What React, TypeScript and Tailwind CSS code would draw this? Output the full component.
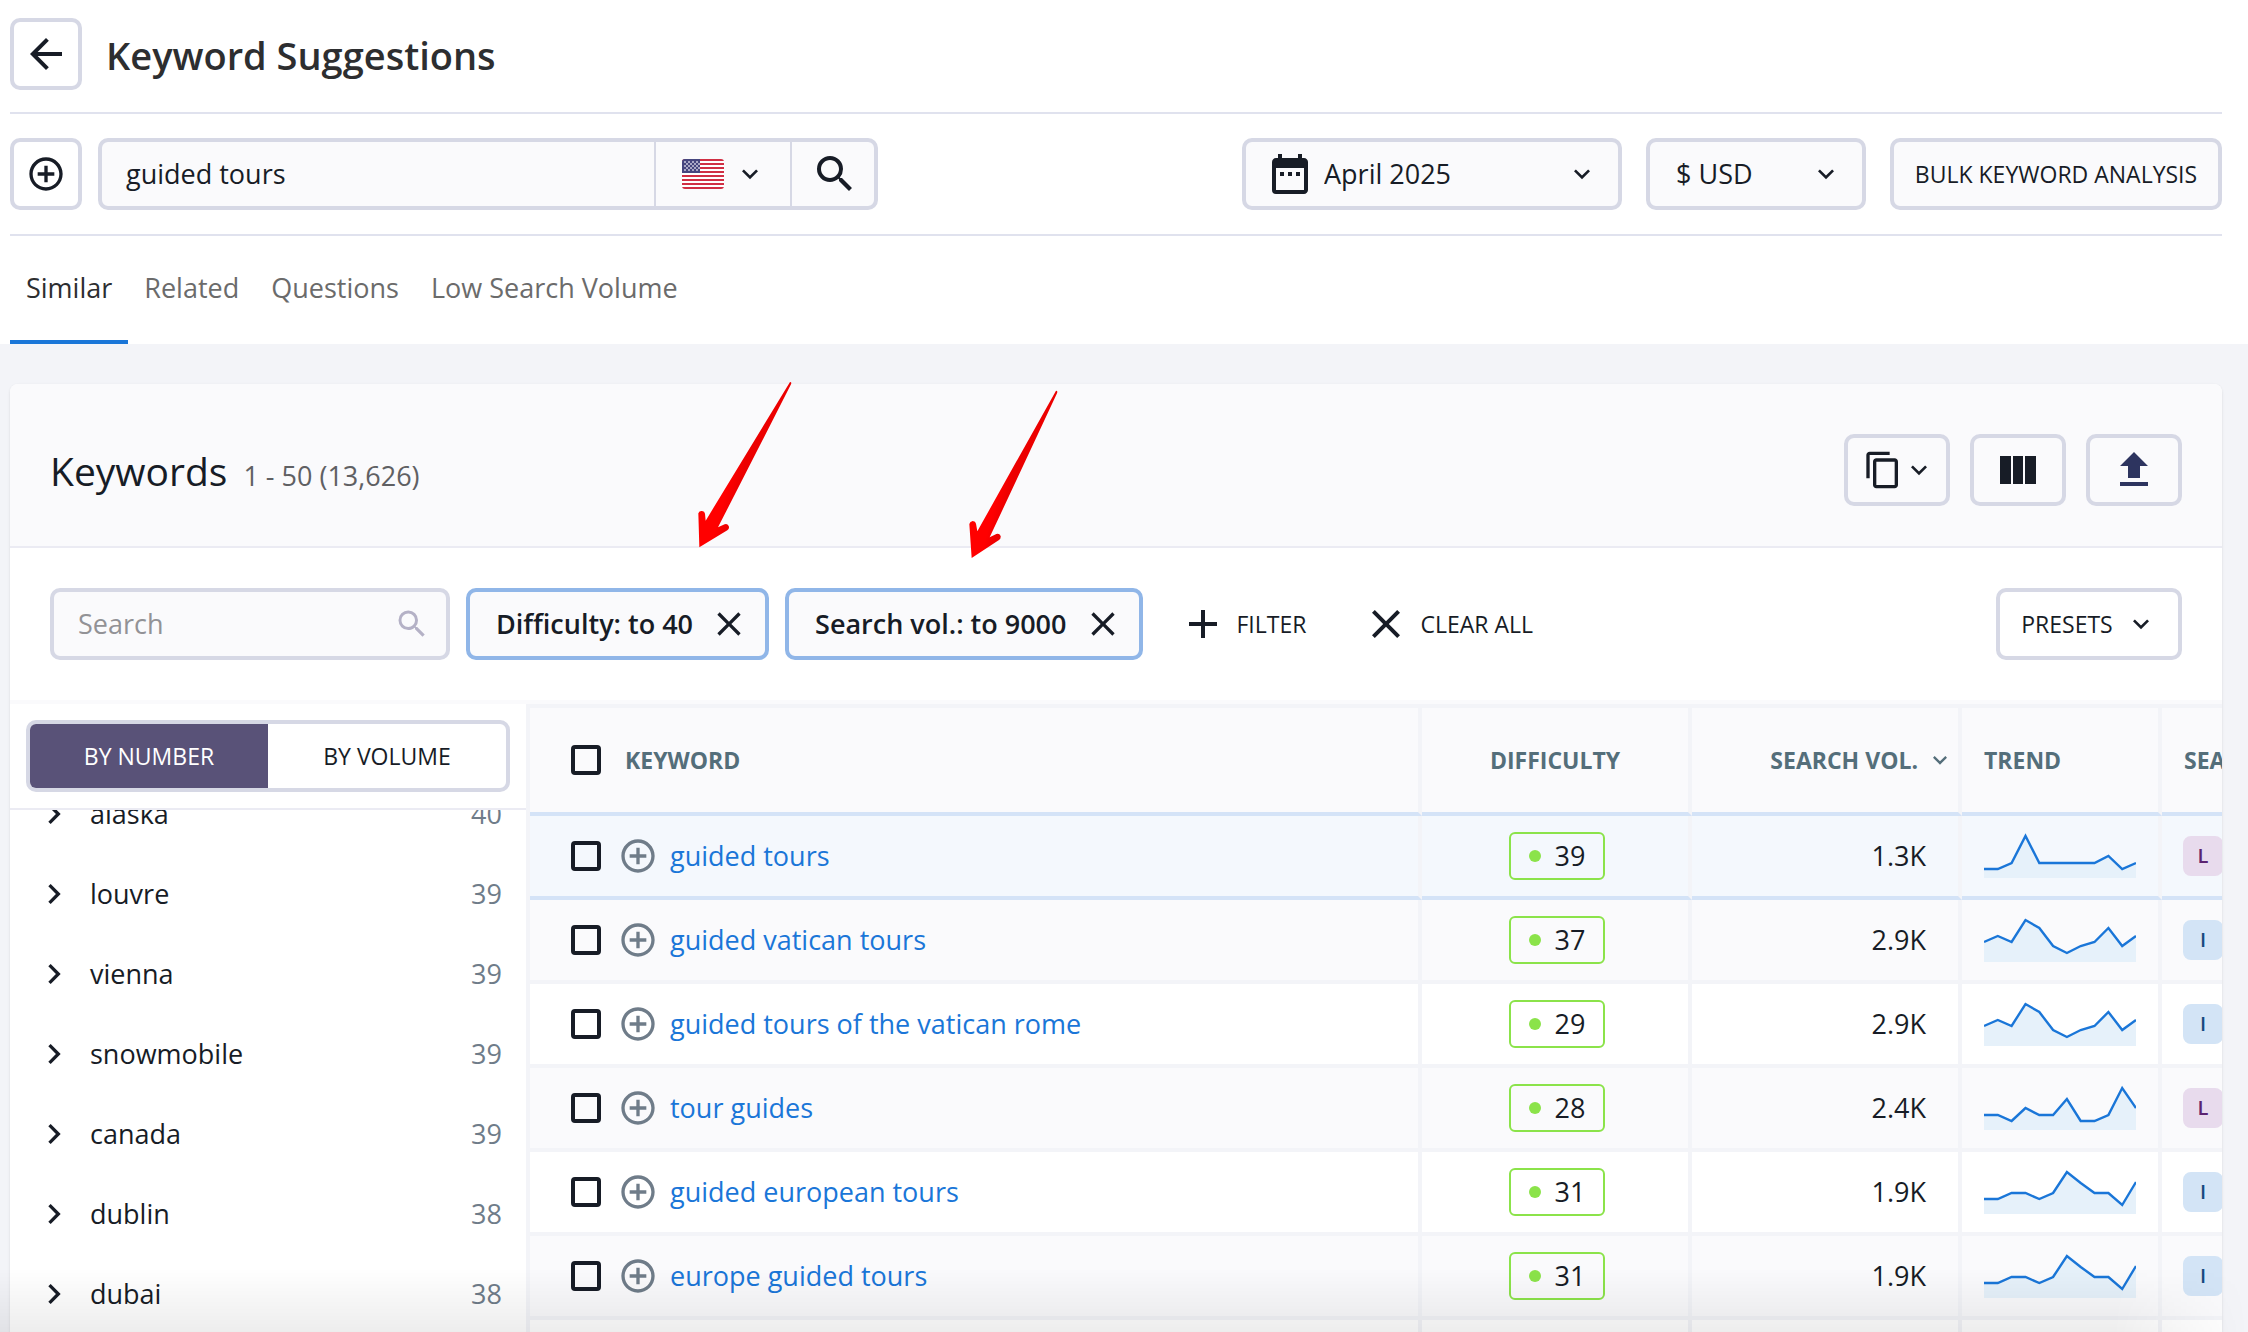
import { useState } from "react";
import type { ReactNode } from "react";
import {
  MdAdd,
  MdAddCircleOutline,
  MdArrowBack,
  MdChevronRight,
  MdClose,
  MdContentCopy,
  MdDateRange,
  MdFileUpload,
  MdKeyboardArrowDown,
  MdSearch,
} from "react-icons/md";

type Row = {
  keyword: string;
  difficulty: number;
  volume: string;
  trend: number[];
  intent: "L" | "I";
};

const tabs = ["Similar", "Related", "Questions", "Low Search Volume"];

const groups = [
  { name: "alaska", count: 40 },
  { name: "louvre", count: 39 },
  { name: "vienna", count: 39 },
  { name: "snowmobile", count: 39 },
  { name: "canada", count: 39 },
  { name: "dublin", count: 38 },
  { name: "dubai", count: 38 },
];

const vatican = [28, 22, 28, 6, 14, 32, 39, 32, 28, 14, 32, 22];
const europe = [33, 33, 27, 27, 33, 27, 6, 17, 27, 27, 39, 16];

const rows: Row[] = [
  {
    keyword: "guided tours",
    difficulty: 39,
    volume: "1.3K",
    trend: [39, 39, 33, 6, 33, 33, 33, 33, 33, 26, 39, 33],
    intent: "L",
  },
  { keyword: "guided vatican tours", difficulty: 37, volume: "2.9K", trend: vatican, intent: "I" },
  { keyword: "guided tours of the vatican rome", difficulty: 29, volume: "2.9K", trend: vatican, intent: "I" },
  {
    keyword: "tour guides",
    difficulty: 28,
    volume: "2.4K",
    trend: [33, 33, 39, 26, 33, 33, 17, 39, 39, 33, 6, 26],
    intent: "L",
  },
  { keyword: "guided european tours", difficulty: 31, volume: "1.9K", trend: europe, intent: "I" },
  { keyword: "europe guided tours", difficulty: 31, volume: "1.9K", trend: europe, intent: "I" },
];

const checkbox =
  "block size-[30px] shrink-0 appearance-none rounded-[4px] border-4 border-[#171c26] checked:bg-[#171c26]";
const box = "h-[72px] rounded-[10px] border-4 border-[#d6d8e5]";

function UsFlag() {
  return (
    <svg width="42" height="30" viewBox="0 0 42 30">
      <clipPath id="flag">
        <rect width="42" height="30" rx="3" />
      </clipPath>
      <g clipPath="url(#flag)">
        <rect width="42" height="30" fill="#fff" />
        {[0, 4, 8, 12, 16, 20, 24, 28].map((y) => (
          <rect key={y} y={y} width="42" height="2" fill="#d02f44" />
        ))}
        <rect width="18" height="14" fill="#46467f" />
        {[2, 4, 6, 8, 10].map((y, i) =>
          [0, 1, 2, 3].map((n) => (
            <rect
              key={`${y}-${n}`}
              x={2 + n * 4 + (i % 2 ? 2 : 0)}
              y={y}
              width="2"
              height="2"
              fill="#a9a8c6"
            />
          )),
        )}
      </g>
    </svg>
  );
}

function ColumnsIcon() {
  return (
    <svg width="36" height="28" viewBox="0 0 36 28" fill="#171c26">
      <rect width="11" height="28" />
      <rect x="13" width="10" height="28" />
      <rect x="25" width="11" height="28" />
    </svg>
  );
}

function Trend({ values }: { values: number[] }) {
  const step = 152 / (values.length - 1);
  const line = values.map((v, i) => `${(i * step).toFixed(1)},${v}`).join(" ");
  return (
    <svg width="152" height="48" viewBox="0 0 152 48" className="block">
      <polygon points={`0,48 ${line} 152,48`} fill="#e6f1fa" />
      <polyline points={line} fill="none" stroke="#1a76d8" strokeWidth="2.4" />
    </svg>
  );
}

function PointerArrows() {
  return (
    <svg
      className="pointer-events-none absolute -top-[14px] left-[670px]"
      width="400"
      height="200"
      viewBox="0 0 1200 600"
    >
      <defs>
        <linearGradient id="red" x1="0.3" y1="0.4" x2="0.5" y2="0.5">
          <stop offset="0.5" stopColor="#ff0000" />
          <stop offset="1" stopColor="#ec0000" />
        </linearGradient>
      </defs>
      <path
        fill="url(#red)"
        d="M330 36Q336 36 333 43L114 472L134 463Q144 460 147 470Q148 477 142 481L58 532L55 430Q58 422 66 423Q74 424 75 431L77 452Z"
      />
      <path
        fill="url(#red)"
        d="M1128 62Q1134 62 1131 70L929 502L949 492Q958 489 962 498Q963 506 957 510L875 564L868 462Q870 454 878 453Q887 454 888 461L892 484Z"
      />
    </svg>
  );
}

function SelectBox({
  label,
  className,
  icon,
  children,
}: {
  label: string;
  className: string;
  icon?: ReactNode;
  children: ReactNode;
}) {
  return (
    <div className={`relative ${className}`}>
      {icon}
      <select
        aria-label={label}
        className={`${box} w-full appearance-none bg-[#fafafc] font-medium ${icon ? "pl-[78px]" : "pl-[26px]"}`}
      >
        {children}
      </select>
      <MdKeyboardArrowDown className="pointer-events-none absolute top-5 right-6 size-8" />
    </div>
  );
}

function FilterChip({ text, onRemove }: { text: string; onRemove: () => void }) {
  return (
    <div className="flex h-[72px] items-center gap-4 rounded-[10px] border-4 border-[#90b6e8] bg-[#fafafc] pr-4 pl-[26px] font-semibold">
      {text}
      <button type="button" aria-label={`Remove ${text}`} onClick={onRemove}>
        <MdClose className="size-10" />
      </button>
    </div>
  );
}

export default function App() {
  const [tab, setTab] = useState("Similar");
  const [mode, setMode] = useState<"number" | "volume">("number");
  const [query, setQuery] = useState("guided tours");
  const [filters, setFilters] = useState(["Difficulty: to 40", "Search vol.: to 9000"]);

  return (
    <div className="relative flex h-screen flex-col overflow-hidden bg-[#f3f4f8] font-['Open_Sans',sans-serif] text-[27px] leading-9 text-[#171c26]">
      <header className="bg-white pr-[26px] pl-[10px]">
        <div className="flex items-center gap-6 border-b-2 border-[#e0e2ee] pt-[18px] pb-[22px]">
          <button type="button" aria-label="Back" className={`${box} flex w-[72px] items-center justify-center`}>
            <MdArrowBack className="size-12 shrink-0" />
          </button>
          <h1 className="pt-0.5 text-[38px] leading-[48px] font-semibold text-[#2d2e30]">Keyword Suggestions</h1>
        </div>

        <div className="flex items-center justify-between border-b-2 border-[#e0e2ee] py-6">
          <div className="flex gap-4">
            <button type="button" aria-label="Add keyword" className={`${box} flex w-[72px] items-center justify-center`}>
              <MdAddCircleOutline className="size-10 shrink-0" />
            </button>
            <form
              onSubmit={(e) => e.preventDefault()}
              className={`${box} flex w-[780px] divide-x-2 divide-[#d6d8e5] bg-[#fafafc]`}
            >
              <input
                type="text"
                aria-label="Keyword"
                value={query}
                onChange={(e) => setQuery(e.target.value)}
                className="min-w-0 flex-1 pl-6 outline-none"
              />
              <button type="button" aria-label="Country" className="flex w-[136px] items-center justify-center gap-[10px] pl-0.5">
                <UsFlag />
                <MdKeyboardArrowDown className="size-8" />
              </button>
              <button type="submit" aria-label="Search" className="flex w-[82px] items-center justify-center pl-1">
                <MdSearch className="size-12" />
              </button>
            </form>
          </div>

          <div className="flex gap-6">
            <SelectBox
              label="Month"
              className="w-[380px]"
              icon={<MdDateRange className="pointer-events-none absolute top-3 left-6 size-12" />}
            >
              <option>April 2025</option>
            </SelectBox>
            <SelectBox label="Currency" className="w-[220px]">
              <option>$ USD</option>
            </SelectBox>
            <button type="button" className={`${box} w-[332px] bg-[#fafafc] text-[23px] font-medium whitespace-nowrap`}>
              BULK KEYWORD ANALYSIS
            </button>
          </div>
        </div>

        <nav className="flex h-[108px] font-medium">
          {tabs.map((t) => (
            <button
              key={t}
              type="button"
              onClick={() => setTab(t)}
              className={`border-b-4 px-4 ${
                tab === t ? "border-b-[#1a76d8] text-[#2d2e30]" : "border-b-transparent text-[#6b6b6b]"
              }`}
            >
              {t}
            </button>
          ))}
        </nav>
      </header>

      <main className="relative mt-10 mr-[26px] ml-[10px] flex min-h-0 flex-1 flex-col rounded-t-lg bg-white shadow-sm">
        <div className="flex h-[164px] shrink-0 items-center justify-between rounded-t-lg border-b-2 border-[#ebebf3] bg-[#fafafc] px-10 pt-[10px]">
          <h2 className="flex items-baseline gap-4 pt-1.5 text-[39px] leading-[48px]">
            Keywords
            <span className="text-[27px] text-[#5f6063]">1 - 50 (13,626)</span>
          </h2>
          <div className="flex gap-5">
            <button type="button" aria-label="Copy" className={`${box} flex w-[106px] items-center justify-center pl-1`}>
              <MdContentCopy className="size-10" />
              <MdKeyboardArrowDown className="size-8" />
            </button>
            <button type="button" aria-label="Columns" className={`${box} flex w-24 items-center justify-center`}>
              <ColumnsIcon />
            </button>
            <button type="button" aria-label="Export" className={`${box} flex w-24 items-center justify-center`}>
              <MdFileUpload className="size-12 text-[#2d345f]" />
            </button>
          </div>
        </div>

        <div className="flex shrink-0 items-center justify-between border-b-4 border-[#fafafc] px-10 py-10">
          <div className="flex items-center gap-4">
            <div className={`${box} flex w-[400px] items-center bg-[#fafafc] pr-4 pl-6`}>
              <input
                type="search"
                aria-label="Search keywords"
                placeholder="Search"
                className="min-w-0 flex-1 outline-none placeholder:text-[#929296]"
              />
              <MdSearch className="size-9 text-[#b4b1c6]" />
            </div>
            {filters.map((f) => (
              <FilterChip key={f} text={f} onRemove={() => setFilters(filters.filter((x) => x !== f))} />
            ))}
            <button type="button" className="ml-5 flex items-center gap-[10px] text-[23px] font-medium">
              <MdAdd className="size-12" />
              FILTER
            </button>
            <button
              type="button"
              onClick={() => setFilters([])}
              className="ml-10 flex items-center gap-[10px] text-[23px] font-medium"
            >
              <MdClose className="size-12" />
              CLEAR ALL
            </button>
          </div>
          <button type="button" className={`${box} flex w-[186px] items-center justify-center gap-3 text-[23px] font-medium`}>
            PRESETS
            <MdKeyboardArrowDown className="size-8" />
          </button>
        </div>

        <div className="flex min-h-0 flex-1">
          <aside className="flex w-[520px] shrink-0 flex-col border-r-4 border-[#f3f4f8]">
            <div className="border-b-2 border-[#ebebf3] p-4">
              <div className={`${box} grid grid-cols-2 overflow-hidden text-[23px] font-medium`}>
                <button
                  type="button"
                  onClick={() => setMode("number")}
                  className={mode === "number" ? "bg-[#595278] text-white" : ""}
                >
                  BY NUMBER
                </button>
                <button
                  type="button"
                  onClick={() => setMode("volume")}
                  className={mode === "volume" ? "bg-[#595278] text-white" : ""}
                >
                  BY VOLUME
                </button>
              </div>
            </div>
            <div className="min-h-0 flex-1 overflow-hidden">
              <ul className="-mt-9">
                {groups.map((g) => (
                  <li key={g.name}>
                    <button type="button" className="flex h-20 w-full items-center px-6">
                      <MdChevronRight className="mr-4 size-10" />
                      {g.name}
                      <span className="ml-auto text-[#6f7c89]">{g.count}</span>
                    </button>
                  </li>
                ))}
              </ul>
            </div>
          </aside>

          <div className="min-w-0 flex-1 overflow-hidden border-t-4 border-[#f3f4f8]">
            <table className="w-[calc(100%+160px)] table-fixed border-separate border-spacing-0 text-left">
              <colgroup>
                <col />
                <col className="w-[270px]" />
                <col className="w-[270px]" />
                <col className="w-[200px]" />
                <col className="w-[220px]" />
              </colgroup>
              <thead className="text-[23px] whitespace-nowrap text-[#546e7a]">
                <tr className="h-[108px] bg-[#fafafc] *:border-r-4 *:border-b-4 *:border-r-[#f3f4f8] *:border-b-[#d4e3f7] *:font-bold">
                  <th>
                    <div className="flex items-center gap-6 pl-[41px]">
                      <input type="checkbox" aria-label="Select all" className={checkbox} />
                      KEYWORD
                    </div>
                  </th>
                  <th className="text-center">DIFFICULTY</th>
                  <th>
                    <div className="flex items-center justify-end gap-2 pr-1">
                      SEARCH VOL.
                      <MdKeyboardArrowDown className="size-7" />
                    </div>
                  </th>
                  <th className="pl-[22px]">TREND</th>
                  <th className="pl-[22px]">SEARCH INTENT</th>
                </tr>
              </thead>
              <tbody>
                {rows.map((row, i) => (
                  <tr
                    key={row.keyword}
                    className={`h-[84px] *:border-r-4 *:border-b-4 *:border-r-[#f3f4f8] ${
                      i === 0
                        ? "bg-[#f4f8fd] *:border-b-[#d4e3f7]"
                        : i % 2
                          ? "bg-[#fafafc] *:border-b-[#f3f4f8]"
                          : "bg-white *:border-b-[#f3f4f8]"
                    }`}
                  >
                    <td>
                      <div className="flex items-center pl-[41px]">
                        <input type="checkbox" aria-label={`Select ${row.keyword}`} className={checkbox} />
                        <button type="button" aria-label={`Add ${row.keyword}`} className="mr-3 ml-[17px]">
                          <MdAddCircleOutline className="size-10 text-[#6f7c89]" />
                        </button>
                        <a href="#" className="text-[#1a76d8]">
                          {row.keyword}
                        </a>
                      </div>
                    </td>
                    <td className="pl-1">
                      <div className="mx-auto flex h-12 w-24 items-center justify-center gap-[14px] rounded-md border-2 border-[#8be34a]">
                        <span className="size-3 rounded-full bg-[#8be34a]" />
                        {row.difficulty}
                      </div>
                    </td>
                    <td className="pr-8 text-right">{row.volume}</td>
                    <td className="pb-1 pl-[22px]">
                      <Trend values={row.trend} />
                    </td>
                    <td className="pl-[21px]">
                      <span
                        className={`flex size-10 items-center justify-center rounded-lg text-[20px] font-semibold ${
                          row.intent === "L" ? "bg-[#e8dbed] text-[#5b2370]" : "bg-[#d3e4f6] text-[#174a80]"
                        }`}
                      >
                        {row.intent}
                      </span>
                    </td>
                  </tr>
                ))}
                <tr className="h-[84px] *:border-r-4 *:border-r-[#f3f4f8]">
                  <td />
                  <td />
                  <td />
                  <td />
                  <td />
                </tr>
              </tbody>
            </table>
          </div>
        </div>

        <PointerArrows />
      </main>

      <div className="pointer-events-none absolute inset-x-0 bottom-0 h-16 bg-linear-to-t from-black/[0.07] to-transparent mask-r-from-94%" />
    </div>
  );
}
